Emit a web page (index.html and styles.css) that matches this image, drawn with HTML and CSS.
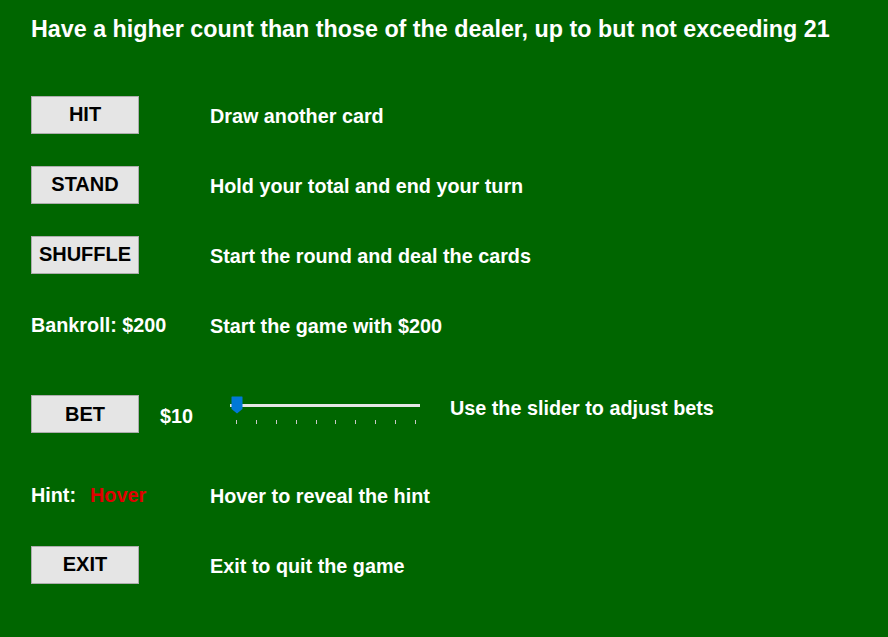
FILE: index.html
```html
<!DOCTYPE html>
<html>
<head>
<meta charset="utf-8">
<link rel="stylesheet" href="styles.css">
</head>
<body>
<div class="page">
  <h1 class="title">Have a higher count than those of the dealer, up to but not exceeding 21</h1>
  <div class="row">
    <div class="left"><button class="btn">HIT</button></div>
    <div class="desc">Draw another card</div>
  </div>
  <div class="row">
    <div class="left"><button class="btn">STAND</button></div>
    <div class="desc">Hold your total and end your turn</div>
  </div>
  <div class="row">
    <div class="left"><button class="btn">SHUFFLE</button></div>
    <div class="desc">Start the round and deal the cards</div>
  </div>
  <div class="row">
    <div class="left label">Bankroll: $200</div>
    <div class="desc">Start the game with $200</div>
  </div>
  <div class="row row-bet">
    <div class="bet-left">
      <button class="btn btn-bet">BET</button>
      <span class="bet-amount">$10</span>
    </div>
    <div class="slider">
      <div class="track"></div>
      <svg class="thumb" width="12" height="18" viewBox="0 0 12 18"><path d="M1 0.5 H11 Q11.5 0.5 11.5 1 V13 L6 17.5 L0.5 13 V1 Q0.5 0.5 1 0.5 Z" fill="#0078d7"/></svg>
      <div class="ticks">
        <span></span><span></span><span></span><span></span><span></span><span></span><span></span><span></span><span></span><span></span>
      </div>
    </div>
    <div class="desc bet-desc">Use the slider to adjust bets</div>
  </div>
  <div class="row">
    <div class="left label">Hint:<span class="hover">Hover</span></div>
    <div class="desc">Hover to reveal the hint</div>
  </div>
  <div class="row">
    <div class="left"><button class="btn">EXIT</button></div>
    <div class="desc">Exit to quit the game</div>
  </div>
</div>
</body>
</html>
```
FILE: styles.css
```css
html, body {
  margin: 0;
  padding: 0;
  background: #006600;
  height: 100%;
}
.page {
  font-family: "Liberation Sans", Arial, sans-serif;
  color: #ffffff;
  font-weight: bold;
  padding-left: 31px;
}
.title {
  margin: 0;
  padding-top: 14px;
  height: 80px;
  box-sizing: border-box;
  font-size: 23.3px;
  line-height: 30px;
  font-weight: bold;
}
.row {
  display: flex;
  align-items: center;
  height: 70px;
}
.left {
  width: 179px;
  flex: none;
  display: flex;
  align-items: center;
  padding-top: 1px;
}
.label {
  font-size: 19.8px;
}
.desc {
  font-size: 19.8px;
  padding-top: 3px;
}
.btn {
  width: 108px;
  height: 38px;
  background: #e5e5e5;
  border: 1px solid #adadad;
  font-family: "Liberation Sans", Arial, sans-serif;
  font-weight: bold;
  font-size: 20px;
  color: #000;
  padding: 0;
  margin-top: -2px;
}
.hover {
  color: #e00000;
  margin-left: 14px;
}
.row-bet {
  height: 100px;
}
.bet-left {
  width: 199px;
  flex: none;
  display: flex;
  align-items: center;
  margin-top: 10px;
}
.bet-amount {
  font-size: 19.8px;
  margin-left: 21px;
  padding-top: 3px;
}
.slider {
  position: relative;
  width: 220px;
  height: 30px;
  flex: none;
  margin-top: 2px;
  margin-bottom: 8px;
}
.track {
  position: absolute;
  left: 0;
  top: 12px;
  width: 190px;
  height: 3px;
  background: #e6e6e6;
}
.thumb {
  position: absolute;
  left: 1px;
  top: 4px;
}
.ticks {
  position: absolute;
  left: 6px;
  top: 28px;
  width: 180px;
  display: flex;
  justify-content: space-between;
}
.ticks span {
  width: 1px;
  height: 4px;
  background: #c8c8c8;
}
.bet-desc {
  margin-bottom: 6px;
}
```
